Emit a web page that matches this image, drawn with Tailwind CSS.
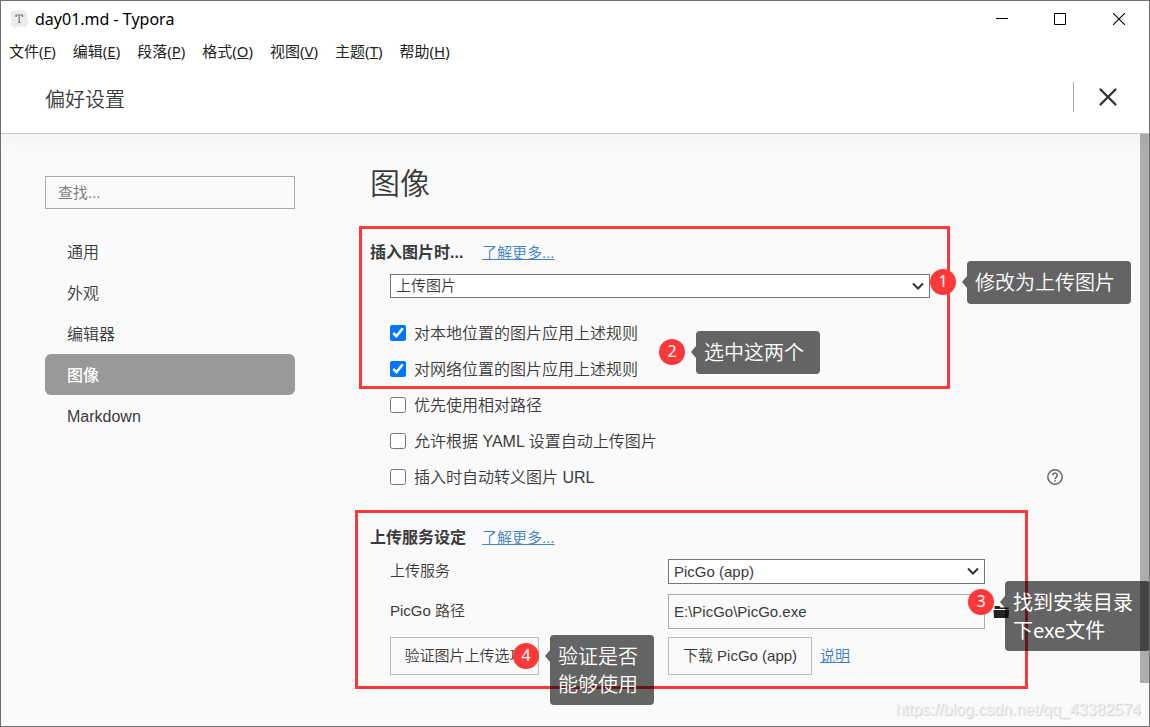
<!DOCTYPE html>
<html lang="zh-CN">
<head>
<meta charset="utf-8">
<title>day01.md - Typora</title>
<script src="https://cdn.jsdelivr.net/npm/@tailwindcss/browser@4"></script>
</head>
<body class="bg-[#fafafa]">
<div class="relative flex min-h-screen flex-col overflow-hidden border border-[#6f6f6f] bg-[#fafafa] font-['Liberation_Sans','Noto_Sans_CJK_SC',sans-serif] text-[#3a3a3a]">

  <header class="relative z-10 border-b border-[#c8c8c8] bg-white shadow-[0_2px_20px_rgba(0,0,0,0.05)]">
    <div class="flex h-9 items-center pl-2 font-['Noto_Sans','Noto_Sans_CJK_SC',sans-serif] text-black">
      <svg class="size-5" viewBox="0 0 20 20" aria-hidden="true">
        <path d="M1 3 15 1l4 14-14 4z" fill="#f6f6f6" stroke="#e6e6e6" stroke-width=".6"/>
        <rect x="2" y="2.500" width="16" height="15" rx="1.500" fill="#ececec"/>
        <path d="M7 8V6h6.500v2M10.200 6v7.500M9 13.500h2.400" fill="none" stroke="#777" stroke-width="1.200"/>
      </svg>
      <h1 class="ml-1.5 text-base">day01.md - Typora</h1>
      <div class="ml-auto flex">
        <button type="button" aria-label="最小化" class="flex h-9 w-[58px] items-center justify-center"><svg class="size-3" viewBox="0 0 12 12"><path d="M0 5.500h12" stroke="#000"/></svg></button>
        <button type="button" aria-label="最大化" class="flex h-9 w-[58px] items-center justify-center"><svg class="size-3" viewBox="0 0 12 12"><path d="M.5.5h11v11H.5z" fill="none" stroke="#000"/></svg></button>
        <button type="button" aria-label="关闭" class="flex h-9 w-[60px] items-center justify-center"><svg class="size-3" viewBox="0 0 12 12"><path d="M0 0 12 12M12 0 0 12" stroke="#000" stroke-width="1.100"/></svg></button>
      </div>
    </div>
    <nav class="flex h-7 items-center gap-[17px] pl-2 font-['Noto_Sans','Noto_Sans_CJK_SC',sans-serif] text-[15px] text-[#222]">
      <button type="button">文件(<u>F</u>)</button>
      <button type="button">编辑(<u>E</u>)</button>
      <button type="button">段落(<u>P</u>)</button>
      <button type="button">格式(<u>O</u>)</button>
      <button type="button">视图(<u>V</u>)</button>
      <button type="button">主题(<u>T</u>)</button>
      <button type="button">帮助(<u>H</u>)</button>
    </nav>
    <div class="flex h-17 items-start pr-[31px] pl-11">
      <h2 class="mt-[21px] text-xl/7 font-[350]">偏好设置</h2>
      <span class="mt-[17px] ml-auto h-[30px] w-px bg-[#aaa]"></span>
      <button type="button" aria-label="关闭偏好设置" class="mt-[22px] ml-6"><svg class="size-5" viewBox="0 0 20 20"><path d="M2.500 2.500l15 15M17.500 2.500l-15 15" stroke="#333" stroke-width="2.400" stroke-linecap="round"/></svg></button>
    </div>
  </header>

  <div class="flex grow">
    <aside class="w-[294px] shrink-0 pt-[42px] pl-11">
      <input type="text" aria-label="查找" placeholder="查找..." class="h-[33px] w-full border border-[#aaa] px-3 text-[15px] font-[350] placeholder:text-[#777]">
      <nav class="mt-[22px] flex flex-col font-[350]">
        <a href="#" class="flex h-[41px] items-center px-[22px] pt-0.5">通用</a>
        <a href="#" class="flex h-[41px] items-center px-[22px] pt-0.5">外观</a>
        <a href="#" class="flex h-[41px] items-center px-[22px] pt-0.5">编辑器</a>
        <a href="#" class="flex h-[41px] items-center rounded-md bg-[#999] px-[22px] pt-0.5 font-medium text-white">图像</a>
        <a href="#" class="flex h-[41px] items-center px-[22px] pt-0.5">Markdown</a>
      </nav>
    </aside>

    <main class="ml-[75px] grow pt-7 pr-[77px]">
      <h2 class="text-3xl/11 font-[350]">图像</h2>

      <section class="mt-[34px]">
        <div class="flex h-6 items-center gap-4 pt-0.5">
          <h3 class="w-24 text-base font-bold">插入图片时...</h3>
          <a href="#" class="text-[15px] font-[350] text-[#4183c4] underline">了解更多...</a>
        </div>
        <div class="relative mt-2.5 ml-5 max-w-[540px]">
          <select aria-label="插入图片时" class="block h-6 w-full appearance-none border border-[#767676] bg-white px-[5px] text-[15px]/5 font-[350]"><option>上传图片</option></select>
          <svg class="pointer-events-none absolute top-2 right-1.5 h-2 w-3" viewBox="0 0 12 8"><path d="M1 1.500l5 5 5-5" fill="none" stroke="#333" stroke-width="2"/></svg>
        </div>
        <div class="mt-[17px] ml-5 font-[350]">
          <label class="flex h-9 items-center gap-2"><input type="checkbox" checked class="size-4 accent-[#0075ff]"><span class="pt-0.5">对本地位置的图片应用上述规则</span></label>
          <label class="flex h-9 items-center gap-2"><input type="checkbox" checked class="size-4 accent-[#0075ff]"><span class="pt-0.5">对网络位置的图片应用上述规则</span></label>
          <label class="flex h-9 items-center gap-2"><input type="checkbox" class="size-4"><span class="pt-0.5">优先使用相对路径</span></label>
          <label class="flex h-9 items-center gap-2"><input type="checkbox" class="size-4"><span class="pt-0.5">允许根据 YAML 设置自动上传图片</span></label>
          <div class="flex h-9 items-center justify-between">
            <label class="flex items-center gap-2"><input type="checkbox" class="size-4"><span class="pt-0.5">插入时自动转义图片 URL</span></label>
            <button type="button" aria-label="帮助"><svg class="size-4" viewBox="0 0 16 16" fill="none" stroke="#666" stroke-width="1.500"><circle cx="8" cy="8" r="7.200"/><path d="M5.700 6.400a2.300 2.300 0 1 1 3.700 1.800C8.500 8.900 8 9.200 8 10.200"/><path d="M8 11.200v1.500"/></svg></button>
          </div>
        </div>
      </section>

      <section class="mt-[30px]">
        <div class="flex h-6 items-center gap-4 pt-0.5">
          <h3 class="w-24 text-base font-bold">上传服务设定</h3>
          <a href="#" class="text-[15px] font-[350] text-[#4183c4] underline">了解更多...</a>
        </div>
        <div class="mt-2.5 ml-5 flex items-center text-[15px] font-[350]">
          <label for="service" class="w-[278px] shrink-0">上传服务</label>
          <div class="relative w-full max-w-[317px]">
            <select id="service" class="block h-[25px] w-full appearance-none border border-[#767676] bg-white px-[5px] text-[15px]/5"><option>PicGo (app)</option></select>
            <svg class="pointer-events-none absolute top-2 right-1.5 h-2 w-3" viewBox="0 0 12 8"><path d="M1 1.500l5 5 5-5" fill="none" stroke="#333" stroke-width="2"/></svg>
          </div>
        </div>
        <div class="mt-2.5 ml-5 flex items-center text-[15px] font-[350]">
          <label for="path" class="w-[278px] shrink-0">PicGo 路径</label>
          <input id="path" type="text" value="E:\PicGo\PicGo.exe" class="h-[35px] w-full max-w-[317px] border border-[#aaa] px-[5px]">
          <button type="button" aria-label="浏览" class="ml-2 shrink-0"><svg class="size-4" viewBox="0 0 16 16"><path d="M1.500 2h5l1 1.500h8V5h-14zM.5 6H16l-.5 8H1z" fill="#222"/></svg></button>
        </div>
        <div class="mt-2 ml-5 flex items-center text-[15px] font-[350]">
          <div class="w-[278px] shrink-0"><button type="button" class="h-[38px] w-[149px] border border-[#bbb] whitespace-nowrap">验证图片上传选项</button></div>
          <button type="button" class="h-[38px] w-36 border border-[#bbb] whitespace-nowrap">下载 PicGo (app)</button>
          <a href="#" class="ml-2 text-[#4183c4] underline">说明</a>
        </div>
      </section>
    </main>
    <div class="h-[549px] w-[9px] shrink-0 bg-[#adadad]"></div>
  </div>

  <!-- Tutorial annotations laid over the window -->
  <div class="pointer-events-none absolute inset-0 z-20 font-['Noto_Sans','Noto_Sans_CJK_SC',sans-serif] text-xl/7 font-[350] text-white">
    <div class="absolute top-[225px] left-[358px] h-[163px] w-[591px] border-3 border-[#fc3838]"></div>
    <div class="absolute top-[509px] left-[354px] h-[179px] w-[673px] border-3 border-[#fc3838]"></div>

    <span class="absolute top-[268px] left-[929px] size-[26px] rounded-full bg-[#fc3838] text-center text-base/6 font-normal">1</span>
    <div class="absolute top-[260px] left-[961px] flex">
      <svg class="mt-[15px] h-3 w-[5px]" viewBox="0 0 5 12"><path d="M5 0v12L0 6z" fill="#000" fill-opacity=".6"/></svg>
      <p class="w-[164px] rounded-sm bg-black/60 px-2 pt-2 pb-[7px]">修改为上传图片</p>
    </div>

    <span class="absolute top-[338px] left-[658px] size-[26px] rounded-full bg-[#fc3838] text-center text-base/6 font-normal">2</span>
    <div class="absolute top-[330px] left-[690px] flex">
      <svg class="mt-[15px] h-3 w-[5px]" viewBox="0 0 5 12"><path d="M5 0v12L0 6z" fill="#000" fill-opacity=".6"/></svg>
      <p class="w-[124px] rounded-sm bg-black/60 px-2 pt-2 pb-[7px]">选中这两个</p>
    </div>

    <span class="absolute top-[588px] left-[967px] size-[26px] rounded-full bg-[#fc3838] text-center text-base/6 font-normal">3</span>
    <div class="absolute top-[580px] left-[999px] flex">
      <svg class="mt-[15px] h-3 w-[5px]" viewBox="0 0 5 12"><path d="M5 0v12L0 6z" fill="#000" fill-opacity=".6"/></svg>
      <p class="w-[145px] rounded-sm bg-black/60 px-2 pt-2 pb-1.5 font-normal">找到安装目录<br>下exe文件</p>
    </div>

    <span class="absolute top-[642px] left-[512px] size-[26px] rounded-full bg-[#fc3838] text-center text-base/6 font-normal">4</span>
    <div class="absolute top-[634px] left-[544px] flex">
      <svg class="mt-[15px] h-3 w-[5px]" viewBox="0 0 5 12"><path d="M5 0v12L0 6z" fill="#000" fill-opacity=".6"/></svg>
      <p class="w-[104px] rounded-sm bg-black/60 px-2 pt-2 pb-1.5">验证是否<br>能够使用</p>
    </div>

    <span class="absolute right-2 bottom-1 font-['Liberation_Sans',sans-serif] text-base font-normal text-[#f2f2f2] [text-shadow:1px_1px_1px_#ccc]">https://blog.csdn.net/qq_43382574</span>
  </div>
</div>
</body>
</html>
